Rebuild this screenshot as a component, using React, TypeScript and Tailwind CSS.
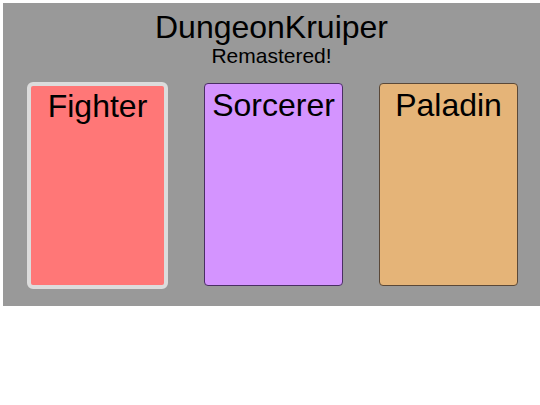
const classes = [
  {
    name: "Fighter",
    card: "w-[141px] h-[207px] mt-0 border-4 border-[#dcdcdc] bg-[#ff7777] rounded-[6px] pt-[5px]",
  },
  {
    name: "Sorcerer",
    card: "w-[139px] h-[203px] mt-[1px] border border-[#4a2f63] bg-[#d494ff] rounded-[4px] pt-[6px]",
  },
  {
    name: "Paladin",
    card: "w-[139px] h-[203px] mt-[1px] border border-[#5a4838] bg-[#e5b478] rounded-[4px] pt-[6px]",
  },
];

const ClassCard = ({ name, card }: { name: string; card: string }) => (
  <div className={`${card} box-border flex flex-col items-center`}>
    <div className="text-[32px] leading-[30px] text-black">{name}</div>
  </div>
);

export default function App() {
  return (
    <div
      className="w-[540px] h-[405px] bg-white pt-[3px] pl-[3px]"
      style={{ fontFamily: '"Liberation Sans", Arial, sans-serif' }}
    >
      <div className="bg-[#999999] h-[303px] pt-[6px] flex flex-col">
        <div className="flex flex-col items-center text-black">
          <div className="text-[32px] leading-[36px]">DungeonKruiper</div>
          <div className="text-[21px] leading-[22px]">Remastered!</div>
        </div>
        <div className="flex flex-row items-start gap-[36px] pl-[24px] mt-[15px]">
          {classes.map((c) => (
            <ClassCard key={c.name} name={c.name} card={c.card} />
          ))}
        </div>
      </div>
    </div>
  );
}
